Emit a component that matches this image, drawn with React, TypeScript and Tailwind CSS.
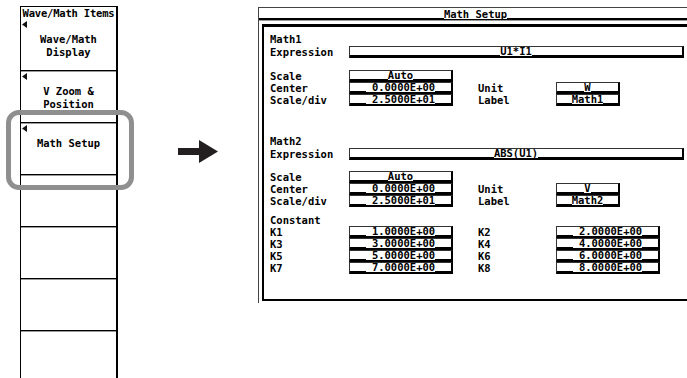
import React from "react";

function Tri() {
  return (
    <svg width="5" height="7" viewBox="0 0 5 7" className="block ml-[1px] mt-[1px]">
      <polygon points="5,0 5,7 0,3.5" fill="#111" />
    </svg>
  );
}

function SoftKey({ lines, mark }: { lines: string[]; mark?: boolean }) {
  return (
    <div className="h-[52px] flex flex-col">
      <div className="h-[8px]">{mark && <Tri />}</div>
      <div className="pt-[5px] text-center leading-[13px]">
        {lines.map((l) => (
          <div key={l} className="whitespace-pre">{l}</div>
        ))}
      </div>
      <div className="mt-auto h-[1px] bg-black" />
      <div className="h-[1px] bg-[#9a9a9a]" />
    </div>
  );
}

function Field({ text, w, lead }: { text: string; w: string; lead?: boolean }) {
  return (
    <div className={`${w} h-[12px] shrink-0 border-t border-l border-[#333] border-b-2 border-r-2 border-b-black border-r-black flex items-center`}>
      <div className="flex-1 self-end h-[1px] bg-black" />
      {lead && <div className="w-[6px]" />}
      <span className="leading-[9px] whitespace-pre">{text}</span>
      <div className="flex-1 self-end h-[1px] bg-black" />
    </div>
  );
}

function Label({ text, w }: { text: string; w: string }) {
  return <div className={`${w} shrink-0 whitespace-pre`}>{text}</div>;
}

function Row({ children, h = "h-[12px]" }: { children: React.ReactNode; h?: string }) {
  return <div className={`${h} flex items-center leading-[12px]`}>{children}</div>;
}

function PairRow({ a, av, b, bv, bw = "w-[104px]" }: { a: string; av: string; b?: string; bv?: string; bw?: string }) {
  return (
    <Row>
      <Label text={a} w="w-[79px]" />
      <Field text={av} w="w-[104px]" lead={av.includes("E")} />
      {b && (
        <>
          <div className="w-[25px] shrink-0" />
          <Label text={b} w="w-[78px]" />
          <Field text={bv ?? ""} w={bw} lead={(bv ?? "").includes("E")} />
        </>
      )}
    </Row>
  );
}

function MathBlock({ n, expr, unit, gap }: { n: number; expr: string; unit: string; gap: string }) {
  return (
    <>
      <Row h="h-[13px]">
        <Label text={`Math${n}`} w="w-[79px]" />
      </Row>
      <Row h="h-[13px]">
        <Label text="Expression" w="w-[79px]" />
        <Field text={expr} w="w-[335px]" />
      </Row>
      <div className={gap} />
      <PairRow a="Scale" av="Auto" />
      <PairRow a="Center" av="0.0000E+00" b="Unit" bv={unit} bw="w-[64px]" />
      <PairRow a="Scale/div" av="2.5000E+01" b="Label" bv={`Math${n}`} bw="w-[64px]" />
    </>
  );
}

export default function App() {
  return (
    <div className="relative w-[687px] h-[378px] overflow-hidden bg-white text-black flex items-start font-['DejaVu_Sans_Mono',monospace] font-bold text-[10.5px]">
      {/* soft key menu */}
      <div className="ml-[20px] mt-[6px] w-[98px] shrink-0">
        <div className="h-[14px] border-t border-l border-black border-r-2 text-center leading-[13px] whitespace-nowrap tracking-[-0.2px]">
          Wave/Math Items
        </div>
        <div className="border-l border-black border-r-2">
          <SoftKey lines={["Wave/Math", "Display"]} mark />
          <SoftKey lines={["V Zoom &", "Position"]} mark />
          <SoftKey lines={["Math Setup"]} mark />
          <SoftKey lines={[]} />
          <SoftKey lines={[]} />
          <SoftKey lines={[]} />
          <SoftKey lines={[]} />
        </div>
      </div>

      {/* arrow */}
      <svg width="40" height="23" viewBox="0 0 40 23" className="ml-[60px] mt-[140px] shrink-0">
        <polygon points="0,8 21,8 21,0 40,11.5 21,23 21,15 0,15" fill="#231f20" />
      </svg>

      {/* dialog */}
      <div className="ml-[40px] mt-[7px] w-[434px] shrink-0 border-t border-l border-[#444] h-[296px]">
        <div className="h-[11px] flex items-end">
          <div className="flex-1 h-[1px] bg-black" />
          <span className="leading-[10px]">Math Setup</span>
          <div className="flex-1 h-[1px] bg-black" />
        </div>
        <div className="h-[1px] bg-black" />
        <div className="h-[1px] bg-[#9a9a9a]" />
        <div className="mt-[3px] ml-[3px] h-[277px] border-t-[3px] border-l-2 border-b-2 border-r-2 border-black pl-[6px] pt-[5px]">
          <MathBlock n={1} expr="U1*I1" unit="W" gap="h-[12px]" />
          <div className="h-[28px]" />
          <MathBlock n={2} expr="ABS(U1)" unit="V" gap="h-[11px]" />
          <div className="h-[7px]" />
          <Row>
            <Label text="Constant" w="w-[79px]" />
          </Row>
          <PairRow a="K1" av="1.0000E+00" b="K2" bv="2.0000E+00" />
          <PairRow a="K3" av="3.0000E+00" b="K4" bv="4.0000E+00" />
          <PairRow a="K5" av="5.0000E+00" b="K6" bv="6.0000E+00" />
          <PairRow a="K7" av="7.0000E+00" b="K8" bv="8.0000E+00" />
        </div>
      </div>

      {/* highlight around selected key */}
      <div className="absolute left-[6px] top-[110px] w-[128px] h-[80px] rounded-[13px] border-[5px] border-[#8f8f8f]" />
    </div>
  );
}
